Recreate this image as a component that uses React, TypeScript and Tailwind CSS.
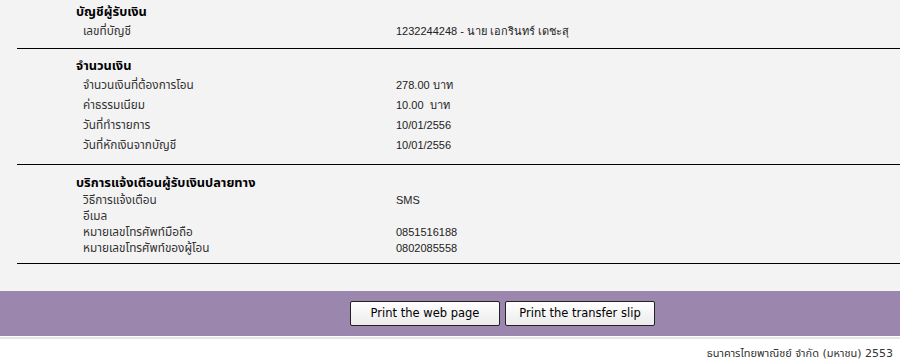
const thai = "font-['Tahoma','DejaVu_Sans','Noto_Sans_Thai','Loma','Garuda',sans-serif]";
const num = "font-['Liberation_Sans','Arial',sans-serif]";

type Row = { label: string; value?: string };

const sections: { title: string; rows: Row[]; rowHeight: string; pad: string }[] = [
  {
    title: "บัญชีผู้รับเงิน",
    rows: [{ label: "เลขที่บัญชี", value: "1232244248 - นาย เอกรินทร์ เดชะสุ" }],
    rowHeight: "h-[20px]",
    pad: "pt-[3px] pb-[7px]",
  },
  {
    title: "จำนวนเงิน",
    rows: [
      { label: "จำนวนเงินที่ต้องการโอน", value: "278.00 บาท" },
      { label: "ค่าธรรมเนียม", value: "10.00  บาท" },
      { label: "วันที่ทำรายการ", value: "10/01/2556" },
      { label: "วันที่หักเงินจากบัญชี", value: "10/01/2556" },
    ],
    rowHeight: "h-[20px]",
    pad: "pt-[8px] pb-[9px]",
  },
  {
    title: "บริการแจ้งเตือนผู้รับเงินปลายทาง",
    rows: [
      { label: "วิธีการแจ้งเตือน", value: "SMS" },
      { label: "อีเมล" },
      { label: "หมายเลขโทรศัพท์มือถือ", value: "0851516188" },
      { label: "หมายเลขโทรศัพท์ของผู้โอน", value: "0802085558" },
    ],
    rowHeight: "h-[16px]",
    pad: "pt-[9px] pb-[7px]",
  },
];

function Section({ title, rows, rowHeight, pad }: { title: string; rows: Row[]; rowHeight: string; pad: string }) {
  return (
    <section className={`ml-[17px] border-b border-black ${pad}`}>
      <h3 className={`${thai} flex h-[18px] items-center pl-[59px] text-[12.8px] font-bold leading-none text-black`}>{title}</h3>
      <ul>
        {rows.map((row) => (
          <li key={row.label} className={`flex items-center leading-none ${rowHeight}`}>
            <span className={`${thai} w-[379px] shrink-0 pl-[66px] pt-[2px] text-[11.8px] text-[#333]`}>{row.label}</span>
            <span className={`${num} whitespace-pre text-[11px] text-[#222]`}>{row.value ?? ""}</span>
          </li>
        ))}
      </ul>
    </section>
  );
}

export default function App() {
  return (
    <div className="h-[363px] w-[900px] overflow-hidden bg-white">
      <div className="h-[291px] bg-[#f3f3f3]">
        {sections.map((s) => (
          <Section key={s.title} {...s} />
        ))}
      </div>
      <div className="flex h-[45px] items-center gap-[5px] bg-[#9b86ae] pl-[350px]">
        <button className={`${thai} h-[25px] w-[150px] rounded-[2px] border border-[#222] bg-gradient-to-b from-white to-[#ebebeb] text-[11.5px] text-black`}>
          Print the web page
        </button>
        <button className={`${thai} h-[25px] w-[150px] rounded-[2px] border border-[#222] bg-gradient-to-b from-white to-[#ebebeb] text-[11.5px] text-black`}>
          Print the transfer slip
        </button>
      </div>
      <div className="mt-[1px] h-[2px] bg-[#e6e6e6]" />
      <p className={`${thai} pr-[7px] pt-[7px] text-right text-[11px] text-[#333]`}>ธนาคารไทยพาณิชย์ จำกัด (มหาชน) 2553</p>
    </div>
  );
}
